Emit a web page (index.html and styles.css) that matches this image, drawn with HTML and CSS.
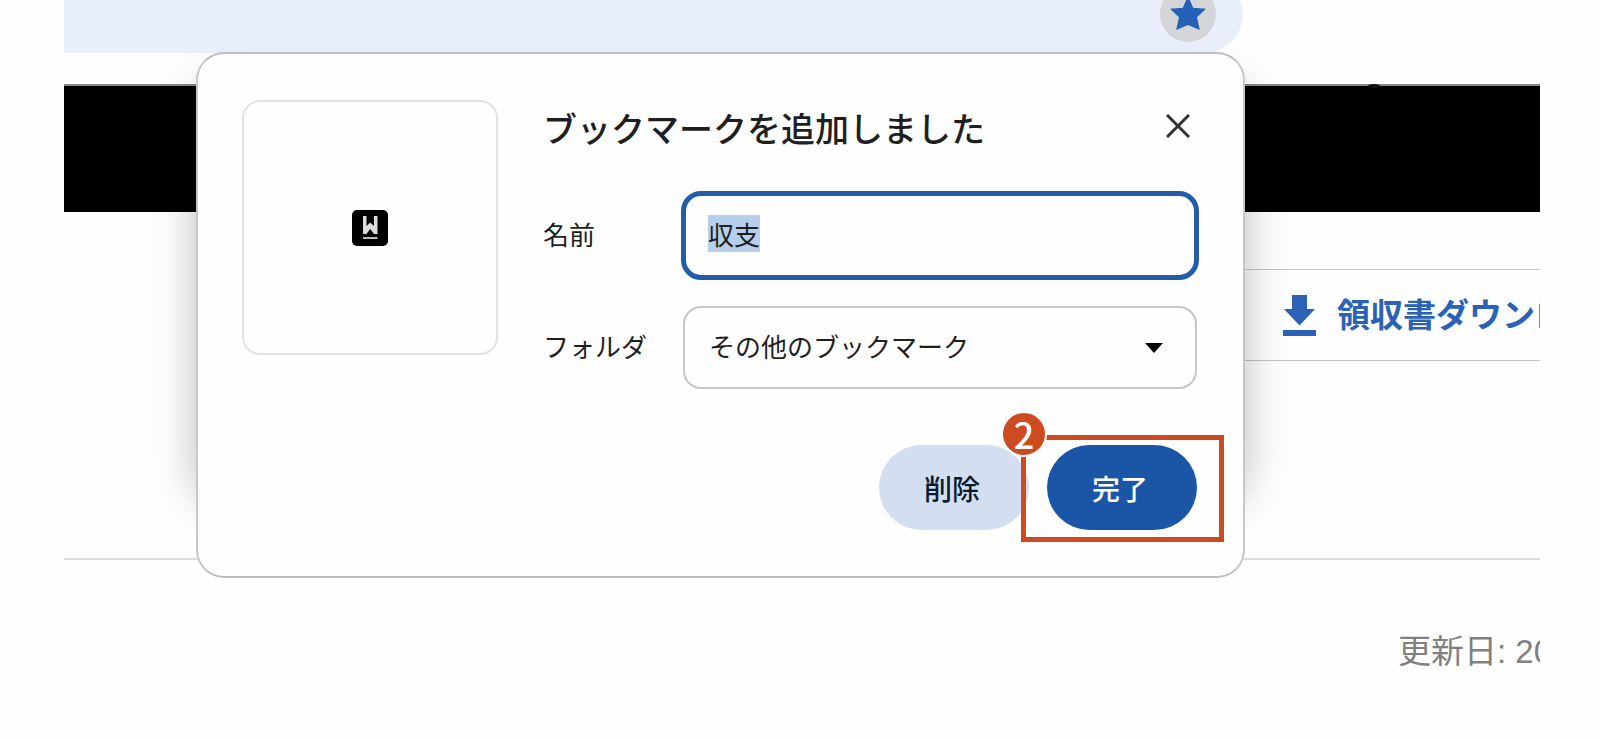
FILE: index.html
```html
<!doctype html>
<html lang="ja">
<head>
<meta charset="utf-8">
<meta name="viewport" content="width=device-width, initial-scale=1">
<title>ブックマーク</title>
<link rel="stylesheet" href="styles.css">
</head>
<body>
<div class="page">
    <div class="omnibox">
        <button class="omnibox__star" type="button" aria-label="ブックマーク">
            <svg width="36" height="36" viewBox="0 0 38 38"><path d="M19 0l5.500 12.500L38 13.500l-9.500 9L31.500 36 19 30.500 6.500 36l3-13.500L0 13.500l13.500-1z"/></svg>
        </button>
    </div>
    <div class="nav"></div>
    <div class="toolbar">
        <a class="toolbar__link" href="#">
            <svg width="33" height="41" viewBox="0 0 33 41"><path d="M9 0h15v14h8L16.500 30.500 1 14h8zM0 35h33v6H0z"/></svg>
            <span class="toolbar__text">領収書ダウンロ</span>
        </a>
    </div>
    <div class="updated">更新日: 20</div>

    <div class="popup">
        <form class="card">
            <div class="card__thumb">
                <svg width="36" height="36" viewBox="0 0 36 36">
                    <rect width="36" height="36" rx="5"/>
                    <path class="logo__mark" d="M11 6h3.500v10l3.700-3.500 3.700 3.500V6H25.500v18h-3.500l-3.800-5-3.800 5H11z"/>
                    <path class="logo__line" d="M11 28h14.500"/>
                </svg>
            </div>
            <div class="card__main">
                <div class="card__header">
                    <h1 class="card__title">ブックマークを追加しました</h1>
                    <button class="card__close" type="button" aria-label="閉じる">
                        <svg width="24" height="24" viewBox="0 0 24 24"><path d="M1 1l22 22M23 1L1 23"/></svg>
                    </button>
                </div>
                <div class="field">
                    <label class="field__label" for="name">名前</label>
                    <input class="field__input" id="name" type="text" value="収支" autofocus>
                </div>
                <div class="field">
                    <label class="field__label" for="folder">フォルダ</label>
                    <div class="field__dropdown">
                        <select class="field__select" id="folder">
                            <option>その他のブックマーク</option>
                        </select>
                        <svg class="field__arrow" width="18" height="10" viewBox="0 0 18 10"><path d="M0 0h18L9 10z"/></svg>
                    </div>
                </div>
                <div class="card__actions">
                    <button class="button" type="button">削除</button>
                    <div class="step">
                        <button class="button button--primary" type="button">完了</button>
                        <div class="step__frame"><span class="step__number">2</span></div>
                    </div>
                </div>
            </div>
        </form>
    </div>
</div>
<script>
const $name = document.getElementById('name');
$name.focus();
$name.select();
</script>
</body>
</html>
```
FILE: styles.css
```css
* {
    box-sizing: border-box;
}
body {
    margin: 0;
    background-color: #fefefe;
    color: #1f1f1f;
    font-family: "Noto Sans CJK JP", sans-serif;
    font-size: 26px;
    line-height: 36px;
}
button,
input,
select {
    font: inherit;
    color: inherit;
    margin: 0;
}
button {
    border: 0;
    padding: 0;
    cursor: pointer;
}
svg {
    display: block;
    flex: none;
}
.page {
    position: relative;
    min-height: 100vh;
    margin: 0 60px 0 64px;
    overflow: hidden;
}

/* browser chrome and page behind the popup */
.omnibox {
    display: flex;
    align-items: center;
    justify-content: flex-end;
    height: 78px;
    margin: -25px 297px 0 0;
    padding-right: 27px;
    border-radius: 0 39px 39px 0;
    background-color: #e9effb;
}
.omnibox__star {
    display: flex;
    align-items: center;
    justify-content: center;
    width: 56px;
    height: 56px;
    border-radius: 50%;
    background-color: #d3d5d8;
    fill: #2460b3;
}
.nav {
    position: relative;
    height: 128px;
    margin-top: 31px;
    border-top: 2px solid #888;
    background-color: #000;
}
.nav::before {
    content: '';
    position: absolute;
    top: -2px;
    right: 160px;
    width: 12px;
    height: 4px;
    border-radius: 50%;
    background-color: #111;
}
.toolbar {
    height: 92px;
    margin: 57px 0 0 1180px;
    padding-left: 39px;
    border-top: 1px solid #c4c4c4;
    border-bottom: 1px solid #c4c4c4;
}
.toolbar__link {
    display: flex;
    align-items: center;
    gap: 21px;
    height: 100%;
    color: #2b62b5;
    fill: #2b62b5;
    font-size: 33px;
    font-weight: 700;
    text-decoration: none;
    white-space: nowrap;
}
.toolbar__text {
    padding-bottom: 4px;
}
.updated {
    margin-top: 197px;
    padding: 74px 0 0 1334px;
    border-top: 2px solid #dcdcdc;
    color: #808080;
    font-family: "Liberation Sans", "Noto Sans CJK JP", sans-serif;
    font-size: 33px;
    white-space: nowrap;
}

/* popup */
.popup {
    position: absolute;
    top: 52px;
    left: 132px;
    right: 295px;
}
.popup::before {
    content: '';
    position: absolute;
    top: 32px;
    right: 0;
    bottom: 76px;
    left: 0;
    border-radius: 28px;
    box-shadow: 0 0 44px rgba(0, 0, 0, 0.26);
}
.card {
    position: relative;
    display: flex;
    align-items: flex-start;
    gap: 45px;
    padding: 46px 44px;
    border: 2px solid #bebebe;
    border-right-color: #c8c8c8;
    border-left-color: #c8c8c8;
    border-radius: 28px;
    background-color: #fefefe;
}
.card__thumb {
    display: flex;
    flex: none;
    align-items: center;
    justify-content: center;
    width: 256px;
    height: 255px;
    border: 2px solid #e2e2e2;
    border-radius: 18px;
}
.logo__mark {
    fill: #ddd;
}
.logo__line {
    stroke: #bbb;
    stroke-width: 2;
}
.card__main {
    display: flex;
    flex: 1;
    flex-direction: column;
    gap: 26px;
}
.card__header {
    display: flex;
    align-items: center;
    justify-content: space-between;
    height: 52px;
    margin-bottom: 13px;
}
.card__title {
    margin: 0;
    padding-top: 4px;
    font-size: 34px;
    font-weight: 500;
}
.card__close {
    display: flex;
    align-items: center;
    justify-content: center;
    width: 42px;
    height: 42px;
    background: none;
    stroke: #333;
    stroke-width: 3;
}
.field {
    display: grid;
    grid-template-columns: 138px 1fr;
    align-items: center;
}
.field__label {
    padding-bottom: 4px;
}
.field__input {
    width: 100%;
    height: 89px;
    padding: 0 22px 4px;
    border: 5px solid #235ca9;
    border-radius: 20px;
    outline: 0;
    background: none;
}
.field__input::selection {
    background-color: #b5cfed;
    color: #1f1f1f;
}
.field__dropdown {
    position: relative;
    padding: 0 2px;
}
.field__select {
    appearance: none;
    display: block;
    width: 100%;
    height: 83px;
    padding: 0 24px 4px;
    border: 2px solid #c6c6c6;
    border-radius: 18px;
    background: none;
}
.field__arrow {
    position: absolute;
    top: 37px;
    right: 36px;
    pointer-events: none;
}
.card__actions {
    display: flex;
    justify-content: flex-end;
    gap: 18px;
    margin-top: 30px;
    padding-right: 2px;
}
.button {
    width: 150px;
    height: 85px;
    padding-right: 4px;
    border-radius: 43px;
    background-color: #d3dff0;
    color: #0c1c30;
    font-size: 28px;
    font-weight: 500;
}
.button--primary {
    background-color: #1b55a6;
    color: #fff;
}

/* numbered step drawn round a button */
.step {
    position: relative;
}
.step__frame {
    position: absolute;
    top: -10px;
    right: -27px;
    bottom: -12px;
    left: -26px;
    border: 5px solid #cd4b20;
    pointer-events: none;
}
.step__number {
    position: absolute;
    top: -29px;
    left: -25px;
    width: 46px;
    height: 46px;
    border: 2px solid #fefefe;
    border-radius: 50%;
    background-color: #cd4b20;
    color: #fff;
    font-family: "Noto Sans CJK JP", sans-serif;
    font-size: 36px;
    font-weight: 500;
    line-height: 40px;
    text-align: center;
}
```
